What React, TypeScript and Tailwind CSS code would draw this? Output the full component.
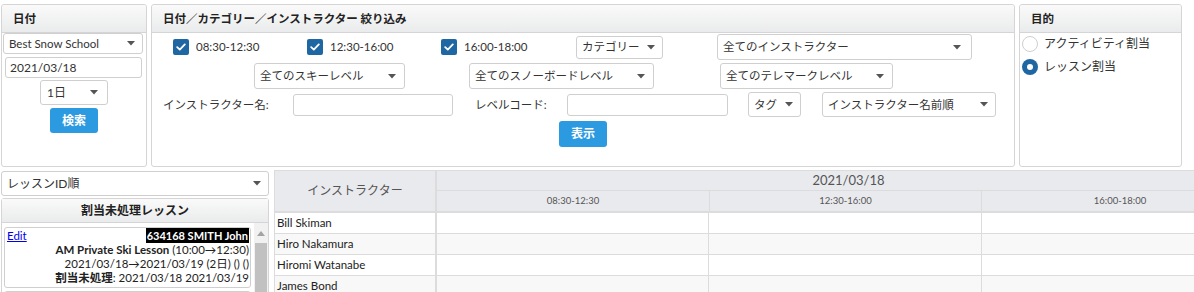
import React from "react";

const Caret = () => (
  <svg width="8" height="5" viewBox="0 0 8 5" className="shrink-0">
    <path d="M0 0h8L4 4.5z" fill="#555" />
  </svg>
);

function Select({ label, cls, pl = "pl-[5px]", pr = "pr-[7px]" }: { label: string; cls: string; pl?: string; pr?: string }) {
  return (
    <div className={`flex items-center justify-between bg-white border border-[#cfcfcf] rounded-[3px] ${pl} ${pr} ${cls}`}>
      <span className="whitespace-nowrap">{label}</span>
      <Caret />
    </div>
  );
}

const Check = ({ label }: { label: string }) => (
  <div className="flex items-center">
    <div className="w-[16px] h-[16px] rounded-[2px] bg-[#1f67a3] flex items-center justify-center">
      <svg width="10" height="8" viewBox="0 0 10 8">
        <path d="M1.2 4.2 3.8 6.6 8.8 1.4" stroke="#fff" strokeWidth="1.8" fill="none" strokeLinecap="round" strokeLinejoin="round" />
      </svg>
    </div>
    <span className="ml-[7px] whitespace-nowrap">{label}</span>
  </div>
);

const PanelHeader = ({ title }: { title: string }) => (
  <div className="h-[28px] shrink-0 border-b border-[#d5d5d5] bg-gradient-to-b from-[#fafafa] to-[#eaebec] flex items-center px-[11px] font-bold text-[#222] rounded-t-[3px]">
    {title}
  </div>
);

const Radio = ({ on, label }: { on: boolean; label: string }) => (
  <div className="flex items-center">
    {on ? (
      <div className="w-[16px] h-[16px] rounded-full bg-[#1f67a3] flex items-center justify-center">
        <div className="w-[6px] h-[6px] rounded-full bg-white" />
      </div>
    ) : (
      <div className="w-[16px] h-[16px] rounded-full border border-[#cfcfcf] bg-white" />
    )}
    <span className="ml-[6px] whitespace-nowrap text-[12px]">{label}</span>
  </div>
);

const Btn = ({ label, cls }: { label: string; cls: string }) => (
  <div className={`bg-[#2b9ae0] rounded-[3px] text-white font-bold text-[12px] flex items-center justify-center ${cls}`}>{label}</div>
);

const names = ["Bill Skiman", "Hiro Nakamura", "Hiromi Watanabe", "James Bond"];

export default function App() {
  return (
    <div className="w-[1194px] h-[292px] overflow-hidden bg-white text-[#333] text-[11.5px] leading-none font-['Lato','Noto_Sans_CJK_JP',sans-serif]">
      {/* top row */}
      <div className="flex pt-[4px] pl-[1px] gap-[4px] h-[167px]">
        {/* panel 1 */}
        <div className="w-[146px] border border-[#d5d5d5] rounded-[3px] flex flex-col">
          <PanelHeader title="日付" />
          <div className="flex flex-col">
            <Select label="Best Snow School" cls="ml-[1px] w-[140px] h-[21px]" />
            <div className="ml-[3px] mt-[3px] w-[137px] h-[21px] border border-[#cfcfcf] rounded-[3px] flex items-center pl-[4px] text-[12px]">2021/03/18</div>
            <Select label="1日" cls="self-center mt-[2px] w-[68px] h-[25px] text-[12px]" pl="pl-[6px]" pr="pr-[9px]" />
            <Btn label="検索" cls="self-center mt-[3px] w-[48px] h-[25px]" />
          </div>
        </div>
        {/* panel 2 */}
        <div className="w-[864px] border border-[#d5d5d5] rounded-[3px] flex flex-col">
          <PanelHeader title="日付／カテゴリー／インストラクター 絞り込み" />
          <div className="flex flex-col">
            <div className="flex items-center mt-[1px] h-[26px] pl-[21px]">
              <div className="w-[134px]"><Check label="08:30-12:30" /></div>
              <div className="w-[134px]"><Check label="12:30-16:00" /></div>
              <div className="w-[135px]"><Check label="16:00-18:00" /></div>
              <Select label="カテゴリー" cls="w-[87px] h-[23px]" />
              <Select label="全てのインストラクター" cls="ml-[54px] w-[255px] h-[26px]" pr="pr-[10px]" />
            </div>
            <div className="flex items-center mt-[3px] h-[26px] pl-[102px]">
              <Select label="全てのスキーレベル" cls="w-[151px] h-[26px]" pr="pr-[8px]" />
              <Select label="全てのスノーボードレベル" cls="ml-[64px] w-[185px] h-[26px]" pr="pr-[8px]" />
              <Select label="全てのテレマークレベル" cls="ml-[66px] w-[173px] h-[26px]" pr="pr-[8px]" />
            </div>
            <div className="flex items-center mt-[3px] h-[25px] pl-[11px]">
              <span className="w-[130px] whitespace-nowrap">インストラクター名:</span>
              <div className="w-[160px] h-[22px] border border-[#cfcfcf] rounded-[3px]" />
              <span className="ml-[22px] w-[92px] whitespace-nowrap">レベルコード:</span>
              <div className="w-[161px] h-[22px] border border-[#cfcfcf] rounded-[3px]" />
              <Select label="タグ" cls="ml-[20px] w-[53px] h-[25px]" />
              <Select label="インストラクター名前順" cls="ml-[21px] w-[174px] h-[25px]" />
            </div>
            <Btn label="表示" cls="self-center mt-[4px] w-[48px] h-[26px]" />
          </div>
        </div>
        {/* panel 3 */}
        <div className="w-[163px] border border-[#d5d5d5] rounded-[3px] flex flex-col">
          <PanelHeader title="目的" />
          <div className="flex flex-col pl-[2px]">
            <div className="mt-[3px]"><Radio on={false} label="アクティビティ割当" /></div>
            <div className="mt-[7px]"><Radio on={true} label="レッスン割当" /></div>
          </div>
        </div>
      </div>

      {/* bottom row */}
      <div className="flex mt-[3px] pl-[1px]">
        {/* left column */}
        <div className="w-[268px] flex flex-col shrink-0">
          <Select label="レッスンID順" cls="mt-[1px] w-[268px] h-[25px] text-[12px]" pl="pl-[5px]" pr="pr-[7px]" />
          <div className="mt-[2px] border border-[#d5d5d5] rounded-t-[3px] h-[100px] flex flex-col">
            <div className="h-[24px] shrink-0 border-b border-[#d5d5d5] bg-gradient-to-b from-[#fafafa] to-[#eaebec] flex items-center justify-center font-bold text-[12px] text-[#222]">
              割当未処理レッスン
            </div>
            <div className="flex">
              <div className="w-[252px] pl-[2px] pt-[4px] flex flex-col">
                <div className="w-[247px] border border-[#cfcfcf] rounded-[3px] pr-[1px] pl-[2px] pb-[2px] text-right text-[#222] leading-[14px]">
                  <div className="flex justify-between items-center">
                    <span className="text-[#0000ee] underline">Edit</span>
                    <span className="bg-black text-white font-bold px-[1px] leading-[15px] text-[11px]">634168 SMITH John</span>
                  </div>
                  <div><span className="font-bold">AM Private Ski Lesson</span> (10:00→12:30)</div>
                  <div>2021/03/18→2021/03/19 (2日) () ()</div>
                  <div><span className="font-bold">割当未処理</span>: 2021/03/18 2021/03/19</div>
                </div>
                <div className="mt-[3px] w-[247px] border border-[#cfcfcf] rounded-[3px] pr-[1px] flex justify-end h-[20px]">
                  <div className="w-[160px] h-[15px] bg-black" />
                </div>
              </div>
              <div className="w-[14px] ml-[1px] bg-[#f1f1f1] flex flex-col items-center">
                <svg width="8" height="5" viewBox="0 0 8 5" className="mt-[8px]">
                  <path d="M0 5h8L4 0z" fill="#a3a3a3" />
                </svg>
                <div className="mt-[7px] w-[12px] h-[60px] bg-[#c1c1c1]" />
              </div>
            </div>
          </div>
        </div>

        {/* table */}
        <div className="ml-[5px] w-[920px] overflow-hidden border-l border-[#dcdcdc]">
          <div className="w-[985px]">
            <div className="flex bg-[#e9eaee] border-t border-[#dcdcdc] text-[#555]">
              <div className="w-[162px] h-[40px] flex items-center justify-center border-r-2 border-[#dcdcdc] text-[12px]">インストラクター</div>
              <div className="flex-1 flex flex-col">
                <div className="h-[20px] flex items-center justify-center border-b border-[#dcdcdc] text-[13px]">2021/03/18</div>
                <div className="h-[20px] flex text-[9.5px]">
                  <div className="w-[273px] flex items-center justify-center border-r border-[#dcdcdc]">08:30-12:30</div>
                  <div className="w-[272px] flex items-center justify-center border-r border-[#dcdcdc]">12:30-16:00</div>
                  <div className="flex-1 flex items-center justify-center pr-[2px]">16:00-18:00</div>
                </div>
              </div>
            </div>
            <div className="h-[2px] bg-[#dcdcdc]" />
            {names.map((n, i) => (
              <div key={n} className={`flex h-[21px] border-b border-[#dcdcdc] ${i % 2 ? "bg-[#f8f8f8]" : "bg-white"}`}>
                <div className="w-[162px] flex items-center pl-[2px] border-r-2 border-[#dcdcdc] text-[#222]">{n}</div>
                <div className="w-[272px] border-r border-[#dcdcdc]" />
                <div className="w-[273px] border-r border-[#dcdcdc]" />
                <div className="flex-1" />
              </div>
            ))}
          </div>
        </div>
      </div>
    </div>
  );
}
